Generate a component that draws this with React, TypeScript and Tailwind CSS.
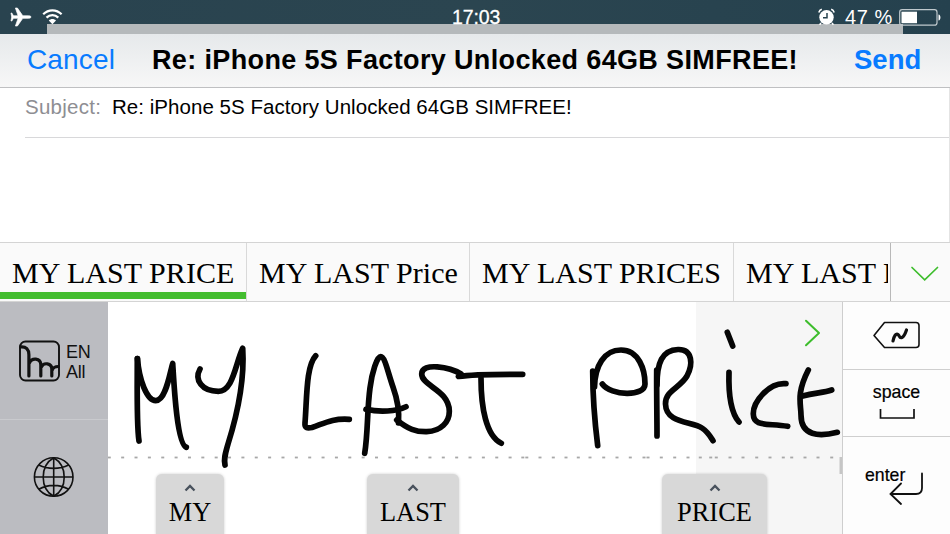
import React from "react";

const SANS = "font-['Liberation_Sans',Arial,sans-serif]";
const SERIF = "font-['Liberation_Serif','Times_New_Roman',serif]";

const strokes = [
  "M137.3 358.5C137.3 385 136.5 425 139 441",
  "M137.5 358.5C139 380 147 400.7 155.7 400.7C166 400.7 170 372 172.7 363.5C174 385 177 444 186.3 447.3",
  "M200 369C194 380 202 391.3 218.3 391.3C233 391.3 235 365 242.7 348.3C245 385 234 425 228 444C225.500 453 223.500 459 225 465",
  "M315.700 355.700C306 366 307 398 305 423C304.500 428 307 428.500 312 427.500C323 424 332 418 349.300 419.300",
  "M364.700 453.300C368 433 367 410 370 388C372 372 377 356.700 380.700 356.700C385 356.700 388 373 393 387C398 401 399.500 411 398.500 423",
  "M366 409.300C380 412.500 396 411.500 406 406.700",
  "M396.700 420C408 429 416 432 426.700 431.700C441 431 449.500 422 449.300 411C449 390 421.700 386 421.700 374C421.700 362 450 367 461 374L458.500 376.500C474 374 490 374.300 522.700 374.300",
  "M481 378.300C481 407 486 436 501.300 443.300",
  "M592.700 371C592.700 402 594.500 420 597.700 445.700",
  "M594.500 387C595 366 604 350 621 350C639 350 645 370 645 384C645 397 611 396 602.300 384",
  "M656.700 370C656.500 393 657 415 657 436",
  "M657 385C657 363 662 350 678 349.500C693 349 693 365 687 376C680 388 665 391 665.500 404C666 424 692 421 702 428C708 432 710 436 713 440.700",
  "M729 372.300C728.500 389 729.500 411 739 422",
  "M727.300 332.300L732.700 346",
  "M786 383.700C769 382 753 402 753.300 414C753.500 427 767 423 787.700 426.300",
  "M808.300 370C796 394 801 404 801 415C801 436 819 437 837.300 432.300",
  "M802.700 396C815 392.500 823 393 831.700 390",
];

const regularDashes = Array.from({ length: 31 }, (_, i) => 109.3 + i * 13.36);
const trailingDashes = [
  522.8, 526.8, 540, 553.3, 566, 578.3, 590, 603.7, 617, 630.3, 644, 648, 661.3,
  674.7, 688, 700.3, 710.7, 716.3, 730, 743, 756.7, 770, 783.3, 791.7, 805, 818, 831.7,
];

function StatusBar() {
  return (
    <div className="relative h-[34px] bg-linear-to-r from-[#29434f] via-[#2b4550] to-[#25414e] text-white">
      <div className="absolute top-6 left-[47px] h-[10px] w-[856px] bg-[#b5b9bb]" />
      <div className="relative flex h-full items-start pl-[10px]">
        <svg width="22" height="20" viewBox="10 7 22 20" className="mt-[7px]" fill="white" stroke="white" strokeWidth="0.700" strokeLinejoin="round">
          <path d="M31 17c0-.9-1.300-1.200-2.700-1.200h-5.500L17.400 8h-2l2.700 7.800h-4.600L11.800 13H11l.7 4-.7 4h.8l1.700-2.700h4.600L15.400 26h2l5.400-7.700h5.500c1.400 0 2.700-.4 2.700-1.300z" />
        </svg>
        <svg width="22" height="20" viewBox="42 7 22 20" className="ml-[10px] mt-[7px]" fill="none" stroke="white" strokeWidth="2.200">
          <path d="M43.200 14.300c5.200-5.200 13.200-5.200 18.400 0M46.500 17.600c3.400-3.400 8.400-3.400 11.800 0" />
          <path d="M48.800 20.500c2-2 5.200-2 7.200 0l-3.600 3.800z" fill="white" stroke="none" />
        </svg>
        <span className="ml-[388px] mt-[6px] w-[49px] whitespace-nowrap text-[19.500px] leading-[22px] tracking-[-0.100px] [-webkit-text-stroke:0.300px_white]">17:03</span>
        <svg width="18" height="18" viewBox="818 8 18 18" className="ml-[317px] mt-2" fill="none" stroke="white">
          <circle cx="826.500" cy="17.300" r="7.200" fill="white" stroke="none" />
          <path d="M818.800 12.500c.5-1.700 1.500-2.700 3-3.200M834.200 12.500c-.5-1.700-1.500-2.700-3-3.200M821 23l-1.400 1.800M832 23l1.400 1.800" strokeWidth="1.500" />
          <path d="M827 13v4.800h-4" stroke="#29434f" strokeWidth="1.500" />
        </svg>
        <span className="ml-[9px] mt-[6px] w-[49px] whitespace-nowrap text-[20px] leading-[22px] tracking-[0.600px]">47 %</span>
        <svg width="43" height="18" viewBox="899 8 43 18" className="ml-[5px] mt-2">
          <rect x="899.700" y="9.700" width="37.300" height="15.500" rx="2.500" fill="none" stroke="#c0c9cd" strokeWidth="1.200" />
          <rect x="901.500" y="11.700" width="15.500" height="11.500" fill="white" />
          <path d="M938.500 14.500c2.600 0 2.600 6 0 6z" fill="white" />
        </svg>
      </div>
    </div>
  );
}

function Candidate({ text, className }: { text: string; className: string }) {
  return (
    <div className={`flex h-full shrink-0 flex-col overflow-hidden border-r border-[#d9d9d9] pl-3 ${className}`}>
      <span className={`${SERIF} mt-[12px] whitespace-nowrap text-[30px] leading-[36px] tracking-[0.050px]`}>{text}</span>
    </div>
  );
}

function WordTab({ word, className }: { word: string; className: string }) {
  return (
    <div className={`absolute top-[172px] flex h-[66px] flex-col items-center rounded-[6px] bg-[#d8d8d8] shadow-[0_0_3px_#0003] ${className}`}>
      <svg width="12" height="8" viewBox="0 0 12 8" className="mt-[10px]" fill="none" stroke="#48515c" strokeWidth="2.300">
        <path d="M1.500 6.500L6 2l4.500 4.500" />
      </svg>
      <span className={`${SERIF} mt-[5px] whitespace-nowrap text-[26.400px] leading-[30px]`}>{word}</span>
    </div>
  );
}

function SideKeys() {
  return (
    <div className="flex w-[108px] flex-col bg-[#bbbcc1]">
      <div className="flex h-[118px] border-b border-[#c9cace] pl-[19px] pt-[38px]">
        <svg width="42" height="42" viewBox="19 340 42 42" fill="none" stroke="#111" strokeLinecap="round">
          <rect x="20" y="341.500" width="39" height="39" rx="5.500" strokeWidth="1.900" />
          <path d="M21 346.800c5-.3 7.900 2.500 7.900 8V376M29.500 363c2-5.500 11.300-5.500 11.300 2v11M41.500 367c2-5 10.300-4 10.300 2v7M52.300 370c.8-2.300 3-3.500 6-3.500" strokeWidth="3.200" />
        </svg>
        <div className="ml-[5px] mt-[2px] text-[18px] leading-[20px] tracking-[-0.200px] text-[#111]">
          <div>EN</div>
          <div>All</div>
        </div>
      </div>
      <div className="flex flex-1 pl-[33px] pt-[36px]">
        <svg width="42" height="42" viewBox="33 456 42 42" fill="none" stroke="#111" strokeWidth="1.600">
          <circle cx="53.700" cy="477" r="19.300" />
          <path d="M34.500 477h38.500M53.700 458v38.500M53.700 457.700c-14 8-14 31 0 38.600M53.700 457.700c14 8 14 31 0 38.600M38.800 465c9 4.500 20.800 4.500 29.800 0M38.800 489.300c9-5.300 20.800-5.300 29.800 0" />
        </svg>
      </div>
    </div>
  );
}

function WritingArea() {
  return (
    <div className="relative flex w-[734px] overflow-hidden bg-white">
      <div className="ml-[588px] flex-1 bg-[#f6f6f6]" />
      <svg className="absolute inset-0" width="734" height="232" viewBox="108 302 734 232" fill="none" strokeLinecap="round" strokeLinejoin="round">
        {[...regularDashes, ...trailingDashes].map((x) => (
          <rect key={x} x={x - 1.5} y="456.600" width="3" height="1.800" fill="#a8a8a8" />
        ))}
        <rect x="839.500" y="457" width="2.500" height="17" fill="#c6c6c6" />
        {strokes.map((d) => (
          <path key={d} d={d} stroke="#050505" strokeWidth="5.700" />
        ))}
        <path d="M806 320.700l13 12.300-13 12.300" stroke="#3dbd2c" strokeWidth="2" />
      </svg>
      <WordTab word="MY" className="left-[48px] w-[68px]" />
      <WordTab word="LAST" className="left-[259px] w-[92px]" />
      <WordTab word="PRICE" className="left-[554px] w-[105px]" />
    </div>
  );
}

function ActionKeys() {
  return (
    <div className="flex w-[108px] flex-col border-l border-[#cecece] bg-[#fdfdfd]">
      <div className="flex h-[68px] border-b border-[#cfcfcf] pl-[29px] pt-[18px]">
        <svg width="50" height="30" viewBox="872 320 50 30" fill="none" stroke="#111" strokeLinecap="round" strokeLinejoin="round">
          <path d="M884.500 322.500h31.500q3 0 3 3v19q0 3-3 3h-31.500L874 335.500z" strokeWidth="1.600" />
          <path d="M893 341C894 336 896 333 898 334.500C900 336 899 338.500 902 337.500C904.500 336.500 905.500 333 906.500 330" strokeWidth="3.200" />
        </svg>
      </div>
      <div className="flex h-[67px] flex-col items-center border-b border-[#cfcfcf] pt-[11px]">
        <span className="text-[17.800px] leading-[22px] [-webkit-text-stroke:0.200px_black]">space</span>
        <svg width="38" height="12" viewBox="877 408 38 12" className="mt-[5px]" fill="none" stroke="#111" strokeWidth="1.700">
          <path d="M879.500 409v9h33.500v-9" />
        </svg>
      </div>
      <div className="relative flex-1 pl-[22px] pt-[27px]">
        <span className="block text-[17.700px] leading-[22px] [-webkit-text-stroke:0.200px_black]">enter</span>
        <svg width="36" height="34" viewBox="888 471 36 34" className="absolute left-[45px] top-[34px]" fill="none" stroke="#111" strokeWidth="1.800" strokeLinecap="round">
          <path d="M922 473.500v14.500q0 6-6 6H890.500M901 483.500L890.500 494l10.500 10" />
        </svg>
      </div>
    </div>
  );
}

export default function App() {
  return (
    <div className={`${SANS} flex h-[534px] w-[950px] flex-col overflow-hidden bg-white text-black`}>
      <StatusBar />
      <header className="flex h-[54px] items-start border-b border-[#bfc0c2] bg-linear-to-b from-[#e6e9eb] to-[#f7f7f7] pt-[10px] leading-[32px]">
        <span className="ml-[27px] w-[125px] whitespace-nowrap text-[28px] tracking-[0.150px] text-[#087bff]">Cancel</span>
        <span className="w-[702px] whitespace-nowrap text-[27px] font-bold tracking-[0.360px]">Re: iPhone 5S Factory Unlocked 64GB SIMFREE!</span>
        <span className="whitespace-nowrap text-[27.500px] font-bold text-[#087bff]">Send</span>
      </header>
      <div className="flex h-[154px] flex-col border-r border-[#e4e4e4]">
        <div className="ml-[25px] flex h-[50px] border-b border-[#d8d8da] pt-[7px] text-[20.500px] leading-[24px]">
          <span className="w-[87px] tracking-[0.250px] text-[#8e8e93]">Subject:</span>
          <span className="whitespace-nowrap tracking-[0.040px]">Re: iPhone 5S Factory Unlocked 64GB SIMFREE!</span>
        </div>
      </div>
      <div className="flex h-[60px] border-y border-[#d4d4d4] bg-[#fafafa]">
        <div className="flex h-full w-[247px] shrink-0 flex-col border-r border-[#d9d9d9]">
          <span className={`${SERIF} ml-3 mt-[12px] h-[37px] whitespace-nowrap text-[30px] leading-[36px] tracking-[0.050px]`}>MY LAST PRICE</span>
          <div className="h-[7px] bg-[#43bd2f]" />
        </div>
        <Candidate text="MY LAST Price" className="w-[223px]" />
        <Candidate text="MY LAST PRICES" className="w-[264px]" />
        <div className="flex w-[157px] shrink-0 border-r border-[#b8b8b8]">
          <div className="ml-3 w-[142px] overflow-hidden">
            <div className={`${SERIF} mt-[12px] whitespace-nowrap text-[30px] leading-[36px] tracking-[0.050px]`}>MY LAST P</div>
          </div>
        </div>
        <div className="flex flex-1 pl-[19px] pt-[22px]">
          <svg width="30" height="18" viewBox="910 266 30 18" fill="none" stroke="#3dbd2c" strokeWidth="1.700" strokeLinecap="round">
            <path d="M912 268.500l12.700 12.300 12.800-12.300" />
          </svg>
        </div>
      </div>
      <div className="flex h-[232px]">
        <SideKeys />
        <WritingArea />
        <ActionKeys />
      </div>
    </div>
  );
}
